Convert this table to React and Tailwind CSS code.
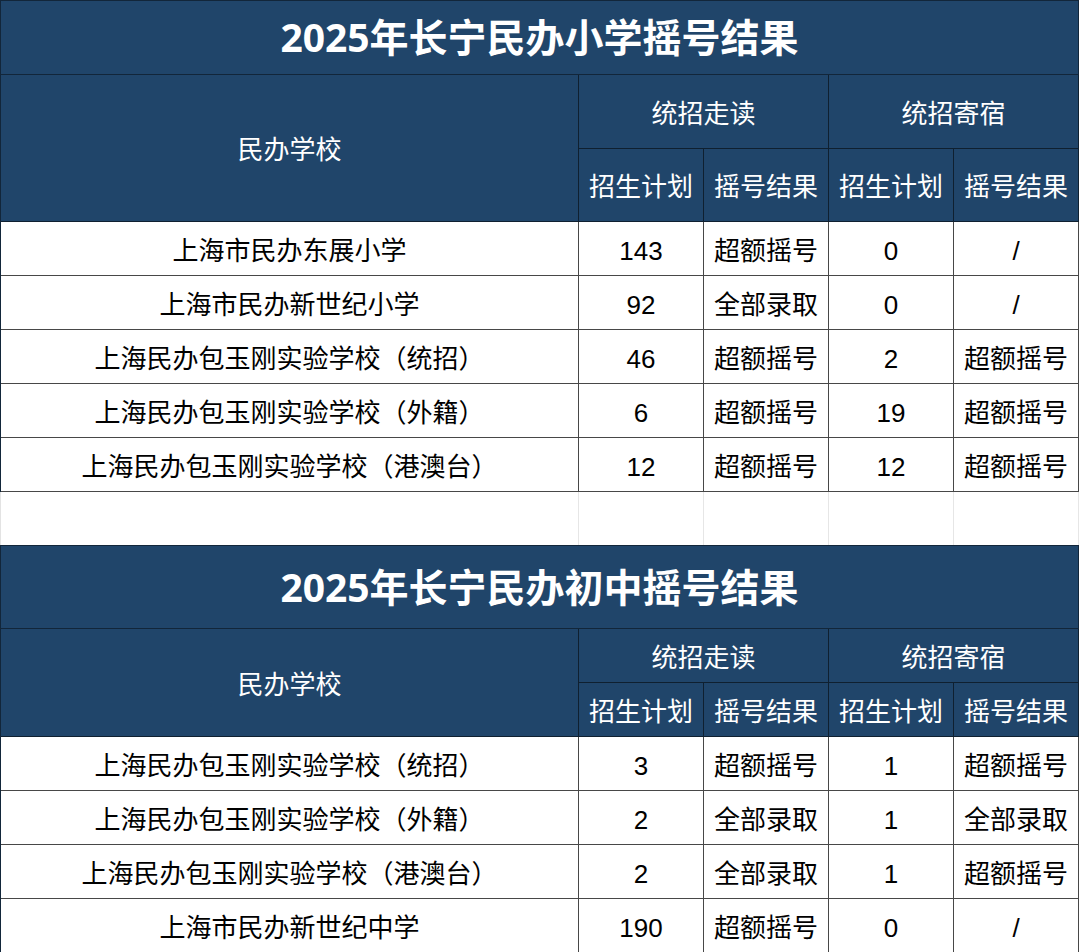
import React from "react";

const BG = "bg-[#20456a]";

const primary = [
  ["上海市民办东展小学", "143", "超额摇号", "0", "/"],
  ["上海市民办新世纪小学", "92", "全部录取", "0", "/"],
  ["上海民办包玉刚实验学校（统招）", "46", "超额摇号", "2", "超额摇号"],
  ["上海民办包玉刚实验学校（外籍）", "6", "超额摇号", "19", "超额摇号"],
  ["上海民办包玉刚实验学校（港澳台）", "12", "超额摇号", "12", "超额摇号"],
];

const middle = [
  ["上海民办包玉刚实验学校（统招）", "3", "超额摇号", "1", "超额摇号"],
  ["上海民办包玉刚实验学校（外籍）", "2", "全部录取", "1", "全部录取"],
  ["上海民办包玉刚实验学校（港澳台）", "2", "全部录取", "1", "超额摇号"],
  ["上海市民办新世纪中学", "190", "超额摇号", "0", "/"],
];

const font = { fontFamily: '"Liberation Sans", "Noto Sans CJK SC", sans-serif' };
const titleFont = { fontFamily: '"Noto Sans", "Noto Sans CJK SC", sans-serif' };

function Section({ title, titleH, h1, h2, rows, top }) {
  return (
    <div className={`w-[1079px] border-l border-l-[#12263a] ${top ? "border-t border-t-[#12263a]" : ""}`}>
      <div
        className={`${BG} ${titleH} flex items-center justify-center border-b border-r border-[#12263a] text-white text-[39px] font-bold`}
        style={titleFont}
      >
        {title}
      </div>
      <div className={`grid grid-cols-[578px_125px_125px_125px_125px] ${BG} text-white text-[26px]`} style={font}>
        <div className={`row-span-2 flex items-center justify-center pt-[5px] border-r border-b border-[#0f2030]`}>民办学校</div>
        <div className={`col-span-2 ${h1} flex items-center justify-center pt-[5px] border-r border-b border-[#0f2030]`}>统招走读</div>
        <div className={`col-span-2 ${h1} flex items-center justify-center pt-[5px] border-r border-b border-[#0f2030]`}>统招寄宿</div>
        {["招生计划", "摇号结果", "招生计划", "摇号结果"].map((t, i) => (
          <div key={i} className={`${h2} flex items-center justify-center pt-[5px] border-r border-b border-[#0f2030]`}>{t}</div>
        ))}
      </div>
      <div className="grid grid-cols-[578px_125px_125px_125px_125px] bg-white text-black text-[26px]" style={font}>
        {rows.map((r, ri) =>
          r.map((c, ci) => (
            <div
              key={`${ri}-${ci}`}
              className="h-[54px] flex items-center justify-center pt-[5px] border-r border-b border-[#474747] whitespace-nowrap"
            >
              {c}
            </div>
          ))
        )}
      </div>
    </div>
  );
}

export default function App() {
  return (
    <div className="w-[1080px] h-[952px] bg-white overflow-hidden">
      <Section title="2025年长宁民办小学摇号结果" titleH="h-[74px]" h1="h-[74px]" h2="h-[73px]" rows={primary} top />
      <div className="grid grid-cols-[578px_125px_125px_125px_125px] w-[1079px] h-[53px] border-l border-[#e3e3e3]">
        {[0, 1, 2, 3, 4].map((i) => (
          <div key={i} className="border-r border-[#e6e6e6]" />
        ))}
      </div>
      <Section title="2025年长宁民办初中摇号结果" titleH="h-[83px]" h1="h-[54px]" h2="h-[54px]" rows={middle} top />
    </div>
  );
}
